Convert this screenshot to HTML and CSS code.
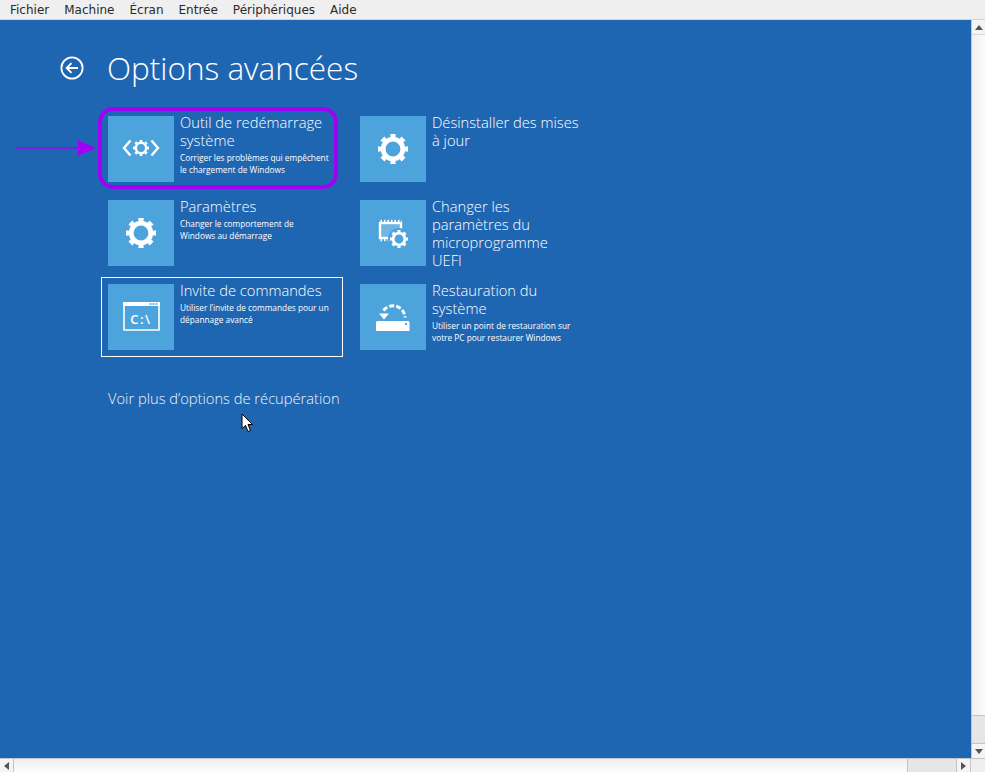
FILE: index.html
```html
<!DOCTYPE html>
<html lang="fr">
<head>
<meta charset="utf-8">
<title>Options avancées</title>
<link rel="stylesheet" href="styles.css">
</head>
<body>
<svg class="defs" aria-hidden="true">
  <symbol id="gear" viewBox="-15 -15 30 30">
    <circle r="9.800" fill="none" stroke="#fff" stroke-width="4.800"/>
    <circle r="13" fill="none" stroke="#fff" stroke-width="4.200" pathLength="80" stroke-dasharray="5 5" stroke-dashoffset="2.500"/>
  </symbol>
</svg>
<nav class="menubar">
  <span class="menu">Fichier</span><span class="menu">Machine</span><span class="menu">Écran</span><span class="menu">Entrée</span><span class="menu">Périphériques</span><span class="menu">Aide</span>
</nav>
<div class="window">
  <main class="screen">
    <header class="head">
      <svg class="back" viewBox="0 0 24 24"><circle cx="12" cy="12" r="10.600" fill="none" stroke="#fff" stroke-width="1.800"/><path d="M18 12H7M11.500 7.200 6.700 12l4.800 4.800" fill="none" stroke="#fff" stroke-width="1.900"/></svg>
      <h1 class="title">Options avancées</h1>
    </header>
    <section class="grid">
      <article class="item marked">
        <div class="tile">
          <svg class="icon" viewBox="0 0 66 66">
            <use href="#gear" x="25" y="24" width="16" height="16"/>
            <path d="M22.500 24.500 16 32l6.500 7.500M43.500 24.500 50 32l-6.500 7.500" fill="none" stroke="#fff" stroke-width="2.400"/>
          </svg>
        </div>
        <div class="text">
          <h2 class="name">Outil de redémarrage système</h2>
          <p class="desc">Corriger les problèmes qui empêchent le chargement de Windows</p>
        </div>
        <svg class="arrow" viewBox="0 0 84 20"><path d="M0 10H66" stroke="#a000f5" stroke-width="1.600"/><path d="M62 2 80 10 62 18Z" fill="#a000f5"/></svg>
      </article>
      <article class="item">
        <div class="tile">
          <svg class="icon" viewBox="0 0 66 66"><use href="#gear" x="18" y="18" width="30" height="30"/></svg>
        </div>
        <div class="text"><h2 class="name">Désinstaller des mises à jour</h2></div>
      </article>
      <article class="item">
        <div class="tile">
          <svg class="icon" viewBox="0 0 66 66"><use href="#gear" x="18" y="18" width="30" height="30"/></svg>
        </div>
        <div class="text">
          <h2 class="name">Paramètres</h2>
          <p class="desc">Changer le comportement de Windows au démarrage</p>
        </div>
      </article>
      <article class="item">
        <div class="tile">
          <svg class="icon" viewBox="0 0 66 66">
            <rect x="20" y="23" width="21" height="15" fill="#fff" fill-opacity=".2" stroke="#fff" stroke-width="2.400"/>
            <path d="M20.500 21H42M20.500 40H31" fill="none" stroke="#fff" stroke-width="2.400" stroke-dasharray="1.500 2"/>
            <circle cx="39" cy="39" r="11" fill="#4da3dc"/>
            <use href="#gear" x="30" y="30" width="18" height="18"/>
          </svg>
        </div>
        <div class="text"><h2 class="name">Changer les paramètres du microprogramme UEFI</h2></div>
      </article>
      <article class="item selected">
        <div class="tile">
          <svg class="icon" viewBox="0 0 66 66">
            <path d="M16 19h35v27H16z" fill="none" stroke="#fff" stroke-width="1.600"/>
            <rect x="15" y="18" width="37" height="4" fill="#fff"/>
            <path d="M41.500 20h8" stroke="#4da3dc" stroke-width="1.400" stroke-dasharray="2 1"/>
            <text class="prompt" x="33" y="40">C:\</text>
          </svg>
        </div>
        <div class="text">
          <h2 class="name">Invite de commandes</h2>
          <p class="desc">Utiliser l’invite de commandes pour un dépannage avancé</p>
        </div>
      </article>
      <article class="item">
        <div class="tile">
          <svg class="icon" viewBox="0 0 66 66">
            <path d="M17.500 37H48a1.500 1.500 0 0 1 1.500 1.500V47H16V38.500A1.500 1.500 0 0 1 17.500 37Z" fill="#fff"/>
            <rect x="45" y="39" width="2" height="2" fill="#4da3dc"/>
            <path d="M23.500 26.500A12 12 0 0 1 45 33.500" fill="none" stroke="#fff" stroke-width="3" stroke-dasharray="5 2"/>
            <path d="M19 29.500h10L24 35.500Z" fill="#fff"/>
          </svg>
        </div>
        <div class="text">
          <h2 class="name">Restauration du système</h2>
          <p class="desc">Utiliser un point de restauration sur votre PC pour restaurer Windows</p>
        </div>
      </article>
    </section>
    <a class="more">Voir plus d’options de récupération</a>
    <svg class="cursor" viewBox="0 0 13 20"><path d="M1 1V15.500L4.500 12.500 7 18.500 9.500 17.500 7 11.500H11.500Z" fill="#fff" stroke="#000" stroke-width="1"/></svg>
  </main>
  <aside class="vbar">
    <div class="btn"><span class="tri up"></span></div>
    <div class="vthumb"></div>
    <div class="vtrack"></div>
    <div class="btn"><span class="tri down"></span></div>
  </aside>
</div>
<footer class="hbar">
  <div class="btn side"><span class="tri left"></span></div>
  <div class="hthumb"></div>
  <div class="htrack"></div>
  <div class="btn side"><span class="tri right"></span></div>
  <div class="corner"></div>
</footer>
</body>
</html>
```
FILE: styles.css
```css
* { box-sizing: border-box; margin: 0; padding: 0; }
html, body { height: 100%; overflow: hidden; }
body {
  display: flex;
  flex-direction: column;
  background: #efefef;
  font-family: "Open Sans", sans-serif;
  color: #fff;
}
.defs { position: absolute; width: 0; height: 0; }

.menubar {
  height: 20px;
  flex: none;
  display: flex;
  align-items: center;
  padding: 1px 0 0 10px;
  gap: 15px;
  background: #efefef;
  border-bottom: 1px solid #d4d4d4;
  font: 12px/18px "DejaVu Sans", sans-serif;
  color: #2a2a2a;
}

.window { flex: 1; min-height: 0; display: flex; }
.screen {
  flex: 1;
  min-width: 0;
  position: relative;
  background: #1f66b2;
  padding-left: 60px;
}
.head { height: 96px; display: flex; align-items: center; gap: 23px; }
.back { width: 24px; height: 24px; flex: none; }
.title { font-size: 31.5px; font-weight: 300; line-height: 40px; }

.grid {
  margin-left: 48px;
  display: grid;
  grid-template-columns: 252px 252px;
  grid-auto-rows: 66px;
  row-gap: 18px;
}
.item { position: relative; display: flex; gap: 6px; width: 228px; }
.selected { outline: 1px solid #fff; outline-offset: 6px; }
.marked::before {
  content: "";
  box-sizing: border-box;
  position: absolute;
  left: -10px;
  top: -9px;
  width: 240px;
  height: 82px;
  border: 4px solid #a000f5;
  border-radius: 15px;
}
.arrow { position: absolute; left: -92px; top: 22px; width: 84px; height: 20px; }
.tile { width: 66px; height: 66px; flex: none; background: #4da3dc; }
.icon { display: block; width: 66px; height: 66px; }
.prompt { font: 600 13px "Open Sans", sans-serif; fill: #fff; text-anchor: middle; letter-spacing: 1.5px; }
.text { flex: 1; margin-top: -3px; min-width: 0; }
.name { font-size: 14.7px; font-weight: 300; line-height: 18px; width: 148px; }
.desc { margin-top: 3px; font-size: 8.3px; line-height: 12px; width: 151px; }

.more {
  display: block;
  margin: 39px 0 0 48px;
  font-size: 14.7px;
  font-weight: 300;
  line-height: 18px;
  color: #eef4fb;
}
.cursor { position: absolute; left: 241px; top: 393px; width: 13px; height: 20px; }

.vbar { width: 14px; flex: none; display: flex; flex-direction: column; border-left: 1px solid #c4c4c4; }
.btn { flex: none; height: 14px; display: flex; align-items: center; justify-content: center; background: #f4f4f4; }
.vthumb { height: 682px; background: linear-gradient(90deg, #f0f0f0, #fbfbfb); flex: none; border-top: 1px solid #d8d8d8; border-bottom: 1px solid #c4c4c4; }
.vtrack { flex: 1; background: #e6e6e6; border-bottom: 1px solid #c4c4c4; }

.hbar { height: 14px; flex: none; display: flex; border-top: 1px solid #c4c4c4; }
.side { width: 14px; height: auto; border-right: 1px solid #c4c4c4; }
.hthumb { width: 894px; flex: none; background: linear-gradient(#f0f0f0, #fbfbfb); border-right: 1px solid #c4c4c4; }
.htrack { flex: 1; background: #e6e6e6; border-right: 1px solid #c4c4c4; }
.corner { width: 14px; flex: none; background: #efefef; }
.tri { width: 0; height: 0; border-style: solid; border-color: transparent; }
.up { border-width: 0 4px 5px; border-bottom-color: #555; }
.down { border-width: 5px 4px 0; border-top-color: #555; }
.left { border-width: 4px 5px 4px 0; border-right-color: #555; }
.right { border-width: 4px 0 4px 5px; border-left-color: #555; }
```
